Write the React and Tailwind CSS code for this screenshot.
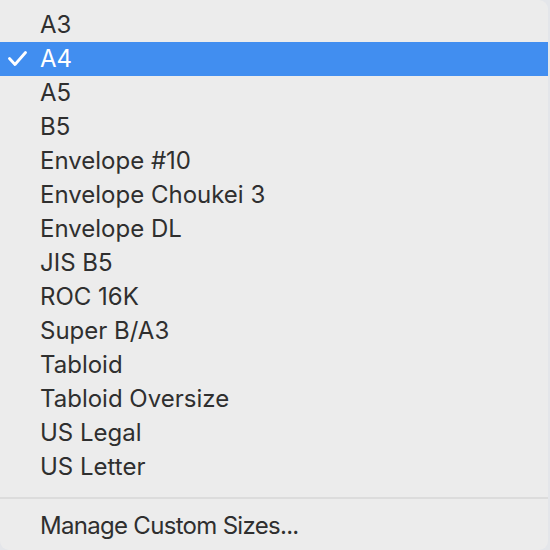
import React from 'react';

const sizes = [
  'A3',
  'A4',
  'A5',
  'B5',
  'Envelope #10',
  'Envelope Choukei 3',
  'Envelope DL',
  'JIS B5',
  'ROC 16K',
  'Super B/A3',
  'Tabloid',
  'Tabloid Oversize',
  'US Legal',
  'US Letter',
];

const Check = () => (
  <svg width="19" height="16" viewBox="0 0 19 16" fill="none">
    <path d="M1.5 7.5 L7 13.5 L17.5 1.5" stroke="white" strokeWidth="2.8" strokeLinecap="round" strokeLinejoin="round" />
  </svg>
);

export default function App() {
  const selected = 'A4';

  return (
    <div
      className="w-[550px] h-[550px] bg-[#e4e6ea] overflow-hidden"
      style={{ fontFamily: 'Inter, "Liberation Sans", Arial, sans-serif' }}
    >
      <div className="w-[548px] h-[550px] bg-[#ececec] rounded-tr-[9px] rounded-b-[9px] pt-2 flex flex-col">
        {sizes.map(size => {
          const active = size === selected;
          return (
            <div
              key={size}
              className={`h-[34px] flex items-center shrink-0 ${active ? 'bg-[#418ef0] text-white' : 'text-[#2f2f2f]'}`}
            >
              <div className="w-[40px] pl-[8px] flex items-center">{active && <Check />}</div>
              <span className="text-[24px] leading-none">{size}</span>
            </div>
          );
        })}
        <div className="h-[27px] flex items-center shrink-0">
          <div className="w-full h-[2px] bg-[#dcdcdc]" />
        </div>
        <div className="h-[30px] flex items-center shrink-0 text-[#2f2f2f]">
          <div className="w-[40px]" />
          <span className="text-[24px] leading-none tracking-[-0.7px]">Manage Custom Sizes...</span>
        </div>
      </div>
    </div>
  );
}
